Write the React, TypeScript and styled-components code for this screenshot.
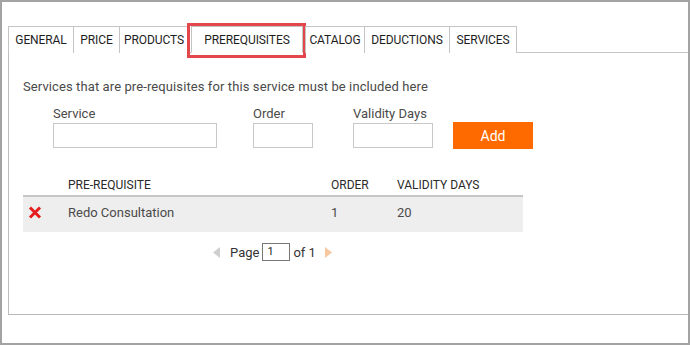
import React from "react";
import styled, { createGlobalStyle } from "styled-components";

const Global = createGlobalStyle`
  html, body { margin: 0; padding: 0; background: #fff; }
  body { font-family: Roboto, "Liberation Sans", Arial, sans-serif; }
  * { box-sizing: border-box; }
`;

const Frame = styled.div`
  width: 690px;
  height: 345px;
  border: 2px solid #a3a3a3;
  padding: 24px 0 0 6px;
  background: #fff;
`;

const Panel = styled.div`
  height: 289px;
  border-left: 1px solid #bdbdbd;
  border-bottom: 1px solid #b8b8b8;
`;

const TabBar = styled.div`
  display: flex;
  height: 27px;
  border-bottom: 1px solid #c4c4c4;
  margin-left: -1px;
`;

const Tab = styled.div<{ $active?: boolean; $w: number }>`
  position: relative;
  width: ${(p) => p.$w}px;
  height: 27px;
  margin: ${(p) => (p.$active ? "0 3px 0 2px" : "0 0 0 -1px")};
  border: 1px solid #c4c4c4;
  border-bottom: ${(p) => (p.$active ? "1px solid #fff" : "none")};
  background: #fff;
  font-size: 12px;
  color: #1e1e1e;
  display: flex;
  align-items: center;
  justify-content: center;
  letter-spacing: -0.1px;
  &:first-child { margin-left: 0; }
  ${(p) =>
    p.$active &&
    `&::after {
      content: "";
      position: absolute;
      left: -5px;
      right: -4px;
      top: -4px;
      bottom: -6px;
      border: 3px solid #e3474c;
    }`}
`;

const Content = styled.div`
  padding: 26px 0 0 14px;
`;

const Intro = styled.div`
  font-size: 13px;
  line-height: 16px;
  color: #4a4a4a;
  letter-spacing: 0.1px;
`;

const Form = styled.div`
  display: grid;
  grid-template-columns: 200px 100px 100px 80px;
  align-items: end;
  margin: 11px 0 0 30px;
`;

const Field = styled.div`
  display: flex;
  flex-direction: column;
`;

const Label = styled.div`
  font-size: 13px;
  line-height: 16px;
  color: #4a4a4a;
  margin-bottom: 1px;
`;

const Input = styled.div<{ $w: number }>`
  width: ${(p) => p.$w}px;
  height: 25px;
  border: 1px solid #c8c8c8;
  background: #fff;
`;

const AddButton = styled.div`
  width: 80px;
  height: 27px;
  margin-bottom: -1px;
  background: #ff6a00;
  color: #fff;
  font-size: 14px;
  display: flex;
  align-items: center;
  justify-content: center;
`;

const Table = styled.div`
  width: 500px;
  margin-top: 30px;
`;

const Row = styled.div<{ $head?: boolean }>`
  display: grid;
  grid-template-columns: 45px 263px 66px 126px;
  align-items: center;
  height: ${(p) => (p.$head ? "19px" : "35px")};
  padding-bottom: ${(p) => (p.$head ? "3px" : "5px")};
  background: ${(p) => (p.$head ? "#fff" : "#eeeeee")};
  border-bottom: ${(p) => (p.$head ? "2px solid #c6c6c6" : "none")};
  font-size: ${(p) => (p.$head ? "12px" : "13px")};
  color: ${(p) => (p.$head ? "#2a2a2a" : "#4a4a4a")};
`;

const IconCell = styled.div`
  display: flex;
  align-items: center;
  padding-left: 5px;
`;

const Pager = styled.div`
  display: flex;
  align-items: center;
  margin-top: 11px;
  padding-left: 190px;
  font-size: 13px;
  color: #333;
`;

const PageInput = styled.div`
  width: 28px;
  height: 18px;
  border: 1px solid #777;
  font-size: 11px;
  line-height: 16px;
  padding-left: 4px;
  color: #222;
  margin: 0 3px 0 3px;
`;

const ArrowIcon = styled.svg<{ $dir: "left" | "right" }>`
  display: block;
  margin: ${(p) => (p.$dir === "left" ? "0 10px 0 0" : "0 0 0 9px")};
`;

const Arrow = ({ dir, color }: { dir: "left" | "right"; color: string }) => (
  <ArrowIcon $dir={dir} width="7" height="11" viewBox="0 0 7 11">
    {dir === "left" ? (
      <polygon points="7,0 7,11 0,5.5" fill={color} />
    ) : (
      <polygon points="0,0 0,11 7,5.5" fill={color} />
    )}
  </ArrowIcon>
);

const RemoveIcon = () => (
  <svg width="14" height="13" viewBox="0 0 14 13">
    <path d="M2 1.5 L12 11.5 M12 1.5 L2 11.5" stroke="#e41e1e" strokeWidth="3" strokeLinecap="butt" />
  </svg>
);

const tabs: { label: string; w: number; active?: boolean }[] = [
  { label: "GENERAL", w: 66 },
  { label: "PRICE", w: 47 },
  { label: "PRODUCTS", w: 70 },
  { label: "PREREQUISITES", w: 112, active: true },
  { label: "CATALOG", w: 60 },
  { label: "DEDUCTIONS", w: 86 },
  { label: "SERVICES", w: 68 },
];

export default function App() {
  return (
    <>
      <Global />
      <Frame>
        <Panel>
          <TabBar>
            {tabs.map((t) => (
              <Tab key={t.label} $w={t.w} $active={t.active}>
                {t.label}
              </Tab>
            ))}
          </TabBar>
          <Content>
            <Intro>Services that are pre-requisites for this service must be included here</Intro>
            <Form>
              <Field>
                <Label>Service</Label>
                <Input $w={164} />
              </Field>
              <Field>
                <Label>Order</Label>
                <Input $w={60} />
              </Field>
              <Field>
                <Label>Validity Days</Label>
                <Input $w={80} />
              </Field>
              <AddButton>Add</AddButton>
            </Form>
            <Table>
              <Row $head>
                <div />
                <div>PRE-REQUISITE</div>
                <div>ORDER</div>
                <div>VALIDITY DAYS</div>
              </Row>
              <Row>
                <IconCell>
                  <RemoveIcon />
                </IconCell>
                <div>Redo Consultation</div>
                <div>1</div>
                <div>20</div>
              </Row>
            </Table>
            <Pager>
              <Arrow dir="left" color="#cfcfcf" />
              <span>Page</span>
              <PageInput>1</PageInput>
              <span>of 1</span>
              <Arrow dir="right" color="#f7c8a0" />
            </Pager>
          </Content>
        </Panel>
      </Frame>
    </>
  );
}
